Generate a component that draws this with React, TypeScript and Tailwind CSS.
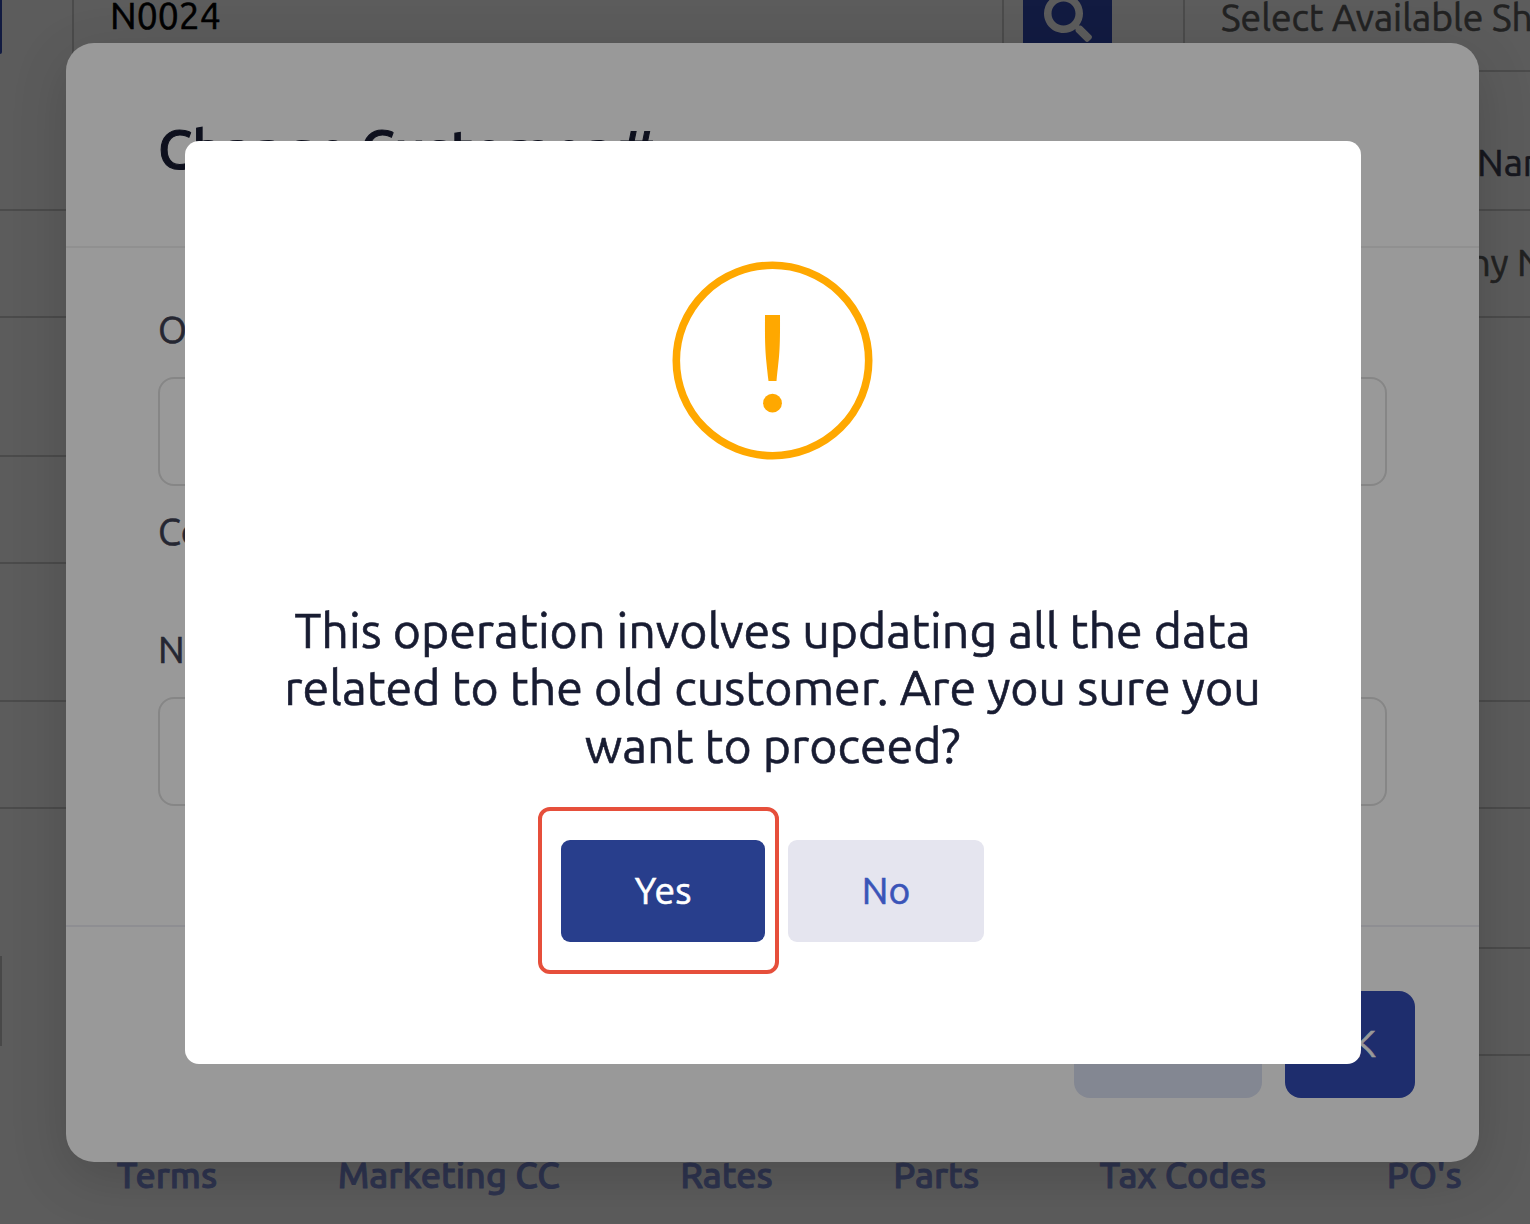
import type { ReactNode } from 'react';
import { FaSearch } from 'react-icons/fa';

const tabs = ['Terms', 'Marketing CC', 'Rates', 'Parts', 'Tax Codes', "PO's"];

function Field({ children }: { children?: ReactNode }) {
  return (
    <div className="flex h-[109px] shrink-0 items-center border-2 border-[#d0d0d0] pl-[36px] whitespace-nowrap text-[#606060]">
      {children}
    </div>
  );
}

function WarningIcon() {
  return (
    <svg
      width="200"
      height="198"
      viewBox="0.5 0.5 200 198"
      className="shrink-0 overflow-visible"
    >
      <ellipse
        cx="100"
        cy="99"
        rx="96.2"
        ry="95.2"
        fill="none"
        stroke="#ffa800"
        strokeWidth="7.6"
      />
      <path
        d="M92.5 53.5H107.5C107.7 91 107 92 104 119.5H96C93 92 92.3 91 92.5 53.5Z"
        fill="#ffa800"
      />
      <circle cx="100" cy="141.7" r="9.4" fill="#ffa800" />
    </svg>
  );
}

function CustomerForm() {
  return (
    <div className="flex h-full flex-col overflow-hidden bg-white">
      <div className="-mt-[37px] flex h-[109px] shrink-0">
        <div className="h-[91px] w-[2px] shrink-0 rounded-br-sm bg-[#324bb6]" />
        <div className="ml-[70px] flex w-[932px] shrink-0 items-center border-2 border-[#d0d0d0] pb-[4px] pl-[36px] text-black">
          N0024
        </div>
        <button className="ml-[19px] flex w-[89px] shrink-0 items-center justify-center bg-[#324bb6] text-white">
          <FaSearch size={48} />
        </button>
        <div className="ml-[71px] w-[700px] shrink-0">
          <Field>Select Available Shipper</Field>
        </div>
      </div>

      <div className="flex flex-1">
        <div className="flex w-[1114px] shrink-0 flex-col pt-[137px]">
          <div className="-ml-[2px] flex flex-col">
            <Field />
            <div className="h-[137px]" />
            <Field />
            <div className="h-[136px]" />
            <Field />
          </div>
          <div className="mt-[147px] h-[90px] w-[2px] bg-[#c8c8c8]" />
        </div>
        <div className="ml-[69px] flex w-[700px] shrink-0 flex-col">
          <div className="flex h-[137px] items-center pt-[45px] pl-[294px] text-[#3f4254]">
            Name
          </div>
          <Field>
            <span className="pb-[2px] pl-[10px]">Search Company Name</span>
          </Field>
          <div className="h-[382px]" />
          <Field />
          <div className="h-[138px]" />
          <Field />
        </div>
      </div>

      <nav className="flex h-[98px] shrink-0 items-center pl-[56.5px] text-[36.1px] font-medium text-[#7f8fdb] [-webkit-text-stroke:0.9px_currentColor]">
        {tabs.map((tab) => (
          <a key={tab} className="shrink-0 px-[60.2px] whitespace-nowrap">
            {tab}
          </a>
        ))}
      </nav>
    </div>
  );
}

function ChangeCustomerModal() {
  return (
    <div className="absolute inset-0 flex justify-center bg-black/40 pt-[43px] pl-[15px]">
      <div className="flex h-[1119px] w-[1413px] flex-col rounded-[28px] bg-white text-[#3f4254] shadow-[0_16px_56px_rgba(0,0,0,0.16)]">
        <div className="flex h-[205px] items-center border-b-2 border-[#f0f0f0] pt-[9px] pl-[92px]">
          <h2 className="text-[55px] font-medium text-[#181c32] [-webkit-text-stroke:1.1px_currentColor]">
            Change Customer #
          </h2>
        </div>
        <div className="flex h-[677px] flex-col px-[92px] pt-[53px]">
          <label className="leading-[56px]">Old Customer #</label>
          <div className="mt-[20px] h-[109px] rounded-2xl border-2 border-[#e0e0e0]" />
          <p className="mt-[17px] leading-[56px]">Company Name</p>
          <label className="mt-[62px] leading-[56px]">New Customer #</label>
          <div className="mt-[20px] h-[109px] rounded-2xl border-2 border-[#e0e0e0]" />
        </div>
        <div className="flex justify-end gap-[23px] border-t-2 border-[#ededf4] pt-[64px] pr-[64px]">
          <button className="h-[107px] w-[188px] rounded-2xl bg-[#dbe1f3]">
            Cancel
          </button>
          <button className="h-[107px] w-[130px] rounded-2xl bg-[#324bb6] pb-[2px] text-white">
            OK
          </button>
        </div>
      </div>
    </div>
  );
}

function ConfirmAlert() {
  return (
    <div className="absolute inset-0 flex justify-center bg-black/40 pt-[141px] pl-[15px]">
      <div className="flex h-[923px] w-[1176px] flex-col items-center rounded-[14px] bg-white pt-[121px]">
        <WarningIcon />
        <p className="mt-[141.5px] text-center text-[48.3px] leading-[57.5px] text-[#181c32]">
          This operation involves updating all the data
          <br />
          related to the old customer. Are you sure you
          <br />
          want to proceed?
        </p>
        <div className="mt-[65.5px] flex gap-[23px]">
          <div className="relative">
            <button className="h-[102px] w-[204px] rounded-[9px] bg-[#283e8c] text-white">
              Yes
            </button>
            <span className="absolute -top-[33px] -left-[23px] h-[167px] w-[241px] rounded-xl border-4 border-[#e64f3b]" />
          </div>
          <button className="h-[102px] w-[196px] rounded-[9px] bg-[#e5e5ef] text-[#3a54b8]">
            No
          </button>
        </div>
      </div>
    </div>
  );
}

export default function App() {
  return (
    <main className="relative h-[1224px] w-[1530px] overflow-hidden font-[Ubuntu,'Noto_Sans',sans-serif] text-[37.3px] [-webkit-text-stroke:0.6px_currentColor]">
      <CustomerForm />
      <ChangeCustomerModal />
      <ConfirmAlert />
    </main>
  );
}
